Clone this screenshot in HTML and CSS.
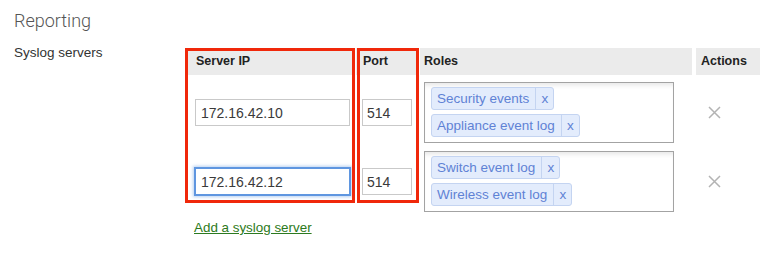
FILE: index.html
```html
<!DOCTYPE html>
<html lang="en">
<head>
    <meta charset="UTF-8">
    <title>Reporting</title>
    <link rel="stylesheet" href="styles.css">
</head>
<body>
    <div class="page">
        <h2 class="section-title">Reporting</h2>

        <div class="field-row">
            <div class="field-label">Syslog servers</div>

            <div class="field-body">
                <div class="syslog-table">
                    <div class="th th-ip">Server IP</div>
                    <div class="th th-port">Port</div>
                    <div class="th th-roles">Roles</div>
                    <div class="th th-actions">Actions</div>

                    <!-- Row 1 -->
                    <div class="td td-ip"><input class="text-field ip-field" type="text" value="172.16.42.10"></div>
                    <div class="td td-port"><input class="text-field port-field" type="text" value="514"></div>
                    <div class="td td-roles">
                        <div class="roles-box">
                            <span class="tag"><span class="tag-label">Security events</span><span class="tag-remove">x</span></span>
                            <span class="tag"><span class="tag-label">Appliance event log</span><span class="tag-remove">x</span></span>
                        </div>
                    </div>
                    <div class="td td-actions">
                        <svg class="remove-icon" width="13" height="13" viewBox="0 0 13 13"><path d="M1 1L12 12M12 1L1 12"/></svg>
                    </div>

                    <!-- Row 2 -->
                    <div class="td td-ip"><input class="text-field ip-field is-focused" type="text" value="172.16.42.12"></div>
                    <div class="td td-port"><input class="text-field port-field" type="text" value="514"></div>
                    <div class="td td-roles">
                        <div class="roles-box">
                            <span class="tag"><span class="tag-label">Switch event log</span><span class="tag-remove">x</span></span>
                            <span class="tag"><span class="tag-label">Wireless event log</span><span class="tag-remove">x</span></span>
                        </div>
                    </div>
                    <div class="td td-actions">
                        <svg class="remove-icon" width="13" height="13" viewBox="0 0 13 13"><path d="M1 1L12 12M12 1L1 12"/></svg>
                    </div>

                    <!-- Highlight boxes drawn over the columns -->
                    <div class="highlight highlight-ip"></div>
                    <div class="highlight highlight-port"></div>
                </div>

                <a href="#" class="add-link">Add a syslog server</a>
            </div>
        </div>
    </div>
</body>
</html>
```

FILE: styles.css
```css
* {
    margin: 0;
    padding: 0;
    box-sizing: border-box;
}

body {
    font-family: 'Liberation Sans', Arial, sans-serif;
    color: #333;
    background: #fff;
}

.page {
    padding: 10px 14px 0;
}

/* Title */
.section-title {
    font-family: 'Roboto', 'Liberation Sans', sans-serif;
    font-weight: 300;
    font-size: 18px;
    line-height: 22px;
    color: #555;
}

.field-row {
    display: flex;
    margin-top: 16px;
}

.field-label {
    width: 173px;
    flex-shrink: 0;
    font-size: 13.5px;
    line-height: 16px;
    margin-top: -3px;
    color: #333;
}

/* Table */
.syslog-table {
    position: relative;
    display: grid;
    grid-template-columns: 165px 60px 272px 64px;
    column-gap: 4px;
}

.th {
    background: #ebebeb;
    height: 27px;
    line-height: 27px;
    font-size: 12.5px;
    font-weight: 700;
    color: #222;
    margin-bottom: 3px;
}

.th-ip { padding-left: 9px; }
.th-port { padding-left: 7px; }
.th-roles { padding-left: 4px; }
.th-actions { padding-left: 5px; }

.td {
    display: flex;
    align-items: center;
    padding: 4px 0;
}

.td-ip { padding-left: 8px; }
.td-port { padding-left: 6px; }
.td-roles { padding-left: 4px; }
.td-actions { padding-left: 12px; }

.text-field {
    height: 27px;
    border: 1px solid #c9c9c9;
    padding: 0 5px;
    font-family: 'Liberation Sans', Arial, sans-serif;
    font-size: 14px;
    color: #3a3a3a;
    background: #fff;
    outline: none;
}

.ip-field { width: 155px; }
.port-field { width: 50px; padding: 0 4px; }

.text-field.is-focused {
    border-color: #5f96e0;
    box-shadow: 0 0 0 1px #5f96e0, 0 0 3px 2px rgba(95, 150, 224, 0.45);
}

/* Roles */
.roles-box {
    width: 250px;
    height: 61px;
    border: 1px solid #a3a3a3;
    padding: 4px 6px;
    display: flex;
    flex-direction: column;
    align-items: flex-start;
    gap: 4px;
    box-shadow: inset 0 5px 5px -3px rgba(0, 0, 0, 0.1);
}

.tag {
    display: inline-flex;
    height: 23px;
    border: 1px solid #c4d4f1;
    border-radius: 3px;
    background: #e3ecfc;
    color: #5f82d5;
    font-size: 13.5px;
    line-height: 21px;
}

.tag-label {
    padding: 0 6px 0 5px;
}

.tag-remove {
    width: 18px;
    text-align: center;
    border-left: 1px solid #c4d4f1;
}

.remove-icon path {
    stroke: #b3b3b3;
    stroke-width: 1.5;
    fill: none;
}

/* Red highlight boxes */
.highlight {
    position: absolute;
    top: 0;
    height: 155px;
    border: 3px solid #f0280a;
}

.highlight-ip {
    left: -2px;
    width: 170px;
}

.highlight-port {
    left: 170px;
    width: 62px;
}

.add-link {
    display: inline-block;
    margin: 4px 0 0 7px;
    font-size: 13.4px;
    line-height: 16px;
    color: #2c7a20;
    text-decoration: underline;
}
```
